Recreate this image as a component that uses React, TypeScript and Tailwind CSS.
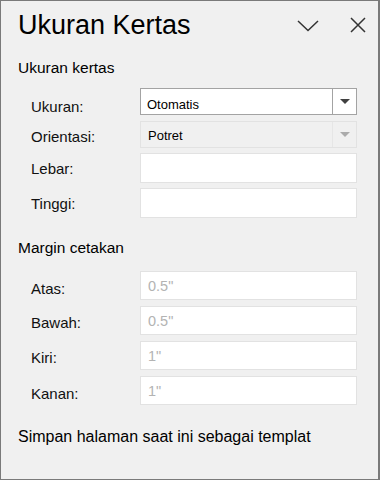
import React from "react";

const font = { fontFamily: '"Liberation Sans", Arial, sans-serif' };

function Row({
  label,
  pt,
  h,
  children,
  mt,
}: {
  label: string;
  pt: string;
  h: string;
  mt: string;
  children: React.ReactNode;
}) {
  return (
    <div className={`flex items-center ${h} ${mt}`}>
      <div className={`w-[122px] shrink-0 pl-[13px] text-[15px] leading-[20px] text-[#111] ${pt}`}>
        {label}
      </div>
      {children}
    </div>
  );
}

function TextBox({ placeholder }: { placeholder?: string }) {
  return (
    <div className="flex h-full w-[217px] items-center border border-[#e2e2e2] bg-white pl-[7px]">
      <input
        readOnly
        placeholder={placeholder}
        className="w-full bg-transparent text-[14.5px] leading-[18px] text-[#111] outline-none placeholder:text-[#b3b3b3]"
      />
    </div>
  );
}

export default function App() {
  return (
    <div
      style={font}
      className="flex h-[480px] w-[380px] flex-col border border-r-2 border-[#7a7a7a] bg-[#f0f0f0] pl-[17px] text-black"
    >
      {/* Title */}
      <div className="flex items-start pt-[8px]">
        <div className="flex-1 text-[27px] leading-[32px] text-black">Ukuran Kertas</div>
        <div className="mr-[12px] flex items-center gap-[31px] pt-[8px]">
          <svg width="22" height="12" viewBox="0 0 22 12" className="mt-[2px]">
            <path d="M1 1 L11 10.5 L21 1" fill="none" stroke="#333" strokeWidth="1.5" />
          </svg>
          <svg width="16" height="16" viewBox="0 0 16 16">
            <path d="M1 1 L15 15 M15 1 L1 15" fill="none" stroke="#333" strokeWidth="1.5" />
          </svg>
        </div>
      </div>

      {/* Section: Ukuran kertas */}
      <div className="mt-[17px] text-[15.5px] leading-[20px] text-black">Ukuran kertas</div>

      <Row label="Ukuran:" pt="pt-[10px]" h="h-[27px]" mt="mt-[10px]">
        <div className="flex h-full w-[217px] border border-[#a3a3a3] bg-white">
          <div className="flex flex-1 items-center pl-[6px] pt-[6px] text-[13px] leading-[16px] text-black">
            Otomatis
          </div>
          <div className="flex w-[24px] items-center justify-center border-l border-[#a3a3a3]">
            <svg width="10" height="5" viewBox="0 0 10 5">
              <path d="M0 0 H10 L5 5 Z" fill="#404040" />
            </svg>
          </div>
        </div>
      </Row>

      <Row label="Orientasi:" pt="pt-[5px]" h="h-[27px]" mt="mt-[6px]">
        <div className="flex h-full w-[217px] border border-[#e2e2e2] bg-[#f0f0f0]">
          <div className="flex flex-1 items-center pl-[7px] pt-[2px] text-[13px] leading-[16px] text-black">
            Potret
          </div>
          <div className="flex w-[24px] items-center justify-center border-l border-[#e6e6e6]">
            <svg width="10" height="5" viewBox="0 0 10 5">
              <path d="M0 0 H10 L5 5 Z" fill="#ababab" />
            </svg>
          </div>
        </div>
      </Row>

      <Row label="Lebar:" pt="pt-[2px]" h="h-[30px]" mt="mt-[5px]">
        <TextBox />
      </Row>

      <Row label="Tinggi:" pt="pt-[1px]" h="h-[30px]" mt="mt-[5px]">
        <TextBox />
      </Row>

      {/* Section: Margin cetakan */}
      <div className="mt-[20px] text-[15.5px] leading-[20px] text-black">Margin cetakan</div>

      <Row label="Atas:" pt="pt-[6px]" h="h-[29px]" mt="mt-[13px]">
        <TextBox placeholder={'0.5"'} />
      </Row>
      <Row label="Bawah:" pt="pt-[4px]" h="h-[29px]" mt="mt-[6px]">
        <TextBox placeholder={'0.5"'} />
      </Row>
      <Row label="Kiri:" pt="pt-[4px]" h="h-[29px]" mt="mt-[6px]">
        <TextBox placeholder={'1"'} />
      </Row>
      <Row label="Kanan:" pt="pt-[6px]" h="h-[29px]" mt="mt-[6px]">
        <TextBox placeholder={'1"'} />
      </Row>

      <div className="mt-[22px] text-[16px] leading-[20px] text-black">
        Simpan halaman saat ini sebagai templat
      </div>
    </div>
  );
}
